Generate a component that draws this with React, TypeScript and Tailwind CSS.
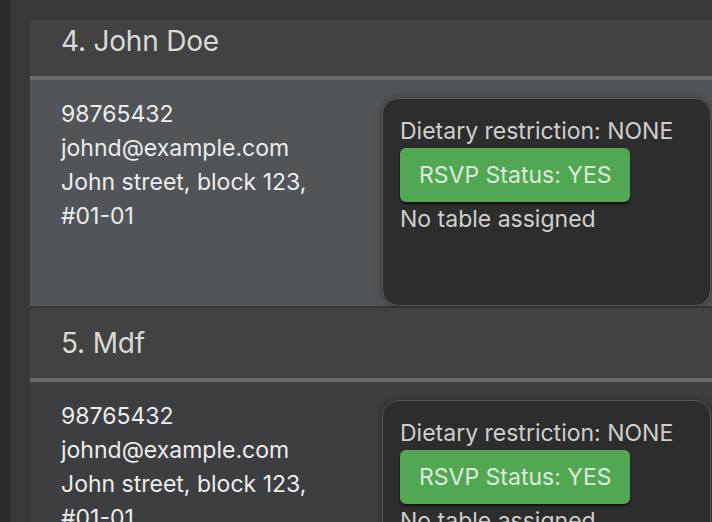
import React from 'react';

type Guest = {
  index: number;
  name: string;
  phone: string;
  email: string;
  address: string[];
  dietary: string;
  rsvp: string;
  table: string;
  selected?: boolean;
};

const guests: Guest[] = [
  {
    index: 4,
    name: 'John Doe',
    phone: '98765432',
    email: 'johnd@example.com',
    address: ['John street, block 123,', '#01-01'],
    dietary: 'NONE',
    rsvp: 'YES',
    table: 'No table assigned',
    selected: true,
  },
  {
    index: 5,
    name: 'Mdf',
    phone: '98765432',
    email: 'johnd@example.com',
    address: ['John street, block 123,', '#01-01'],
    dietary: 'NONE',
    rsvp: 'YES',
    table: 'No table assigned',
  },
];

function GuestCard({ guest }: { guest: Guest }) {
  return (
    <div className="flex flex-col">
      {/* name header */}
      <div className="h-[70px] bg-[#424242] rounded-tl-[4px] flex items-center pl-[31px]">
        <span className="text-[28px] text-[#dadada] tracking-[-0.2px]">
          {guest.index}. {guest.name}
        </span>
      </div>
      <div className="h-[4px] bg-[#6b6b6b]" />

      {/* details */}
      <div
        className={`h-[226px] flex pl-[31px] pt-[17px] ${
          guest.selected ? 'bg-[#515558]' : 'bg-[#3d3e40]'
        }`}
      >
        <div className="w-[322px] text-[23px] leading-[34px] text-[#ececec]">
          <div>{guest.phone}</div>
          <div>{guest.email}</div>
          {guest.address.map((line) => (
            <div key={line}>{line}</div>
          ))}
        </div>

        <div className="ml-[-1px] mt-[1px] w-[329px] h-[208px] shrink-0 rounded-[16px] border border-[#555555] bg-[#2d2d2d] shadow-[0_0_8px_rgba(0,0,0,0.35)] pl-[17px] pt-[15px] text-[23px] leading-[34px] text-[#cfcfcf]">
          <div>Dietary restriction: {guest.dietary}</div>
          <div className="inline-block rounded-[6px] bg-[#52a852] px-[19px] py-[10px] text-[#dde8dd] shadow-[0_2px_2px_rgba(0,0,0,0.6)]">
            RSVP Status: {guest.rsvp}
          </div>
          <div>{guest.table}</div>
        </div>
      </div>
    </div>
  );
}

export default function App() {
  return (
    <div
      className="w-[712px] h-[522px] overflow-hidden flex bg-[#383838]"
      style={{ fontFamily: 'Inter, "Noto Sans", sans-serif' }}
    >
      <div className="w-[10px] shrink-0 bg-[#2b2b2b]" />
      <div className="flex-1 pl-[20px] pt-[20px] overflow-hidden">
        <div className="h-full overflow-hidden">
          <div className="flex flex-col gap-[2px] mt-[-14px]">
            {guests.map((g) => (
              <GuestCard key={g.index} guest={g} />
            ))}
          </div>
        </div>
      </div>
    </div>
  );
}
